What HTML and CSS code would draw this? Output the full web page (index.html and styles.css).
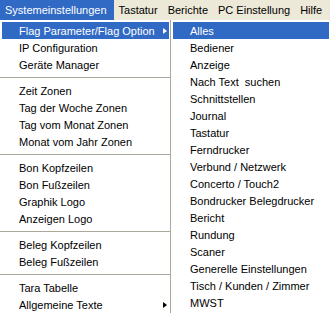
FILE: index.html
```html
<!doctype html>
<html>
<head>
<meta charset="utf-8">
<title>Systemeinstellungen</title>
<link rel="stylesheet" href="styles.css">
</head>
<body>
<div class="menubar">
	<span class="bar-item active">Systemeinstellungen</span>
	<span class="bar-item">Tastatur</span>
	<span class="bar-item">Berichte</span>
	<span class="bar-item">PC Einstellung</span>
	<span class="bar-item">Hilfe</span>
</div>
<div class="menus">
	<ul class="dropdown main">
		<li class="item active sub">Flag Parameter/Flag Option<i class="arrow"></i></li>
		<li class="item">IP Configuration</li>
		<li class="item">Geräte Manager</li>
		<li class="sep"></li>
		<li class="item">Zeit Zonen</li>
		<li class="item">Tag der Woche Zonen</li>
		<li class="item">Tag vom Monat Zonen</li>
		<li class="item">Monat vom Jahr Zonen</li>
		<li class="sep"></li>
		<li class="item">Bon Kopfzeilen</li>
		<li class="item">Bon Fußzeilen</li>
		<li class="item">Graphik Logo</li>
		<li class="item">Anzeigen Logo</li>
		<li class="sep"></li>
		<li class="item">Beleg Kopfzeilen</li>
		<li class="item">Beleg Fußzeilen</li>
		<li class="sep"></li>
		<li class="item">Tara Tabelle</li>
		<li class="item sub">Allgemeine Texte<i class="arrow"></i></li>
	</ul>
	<ul class="dropdown submenu">
		<li class="item active">Alles</li>
		<li class="item">Bediener</li>
		<li class="item">Anzeige</li>
		<li class="item">Nach Text&nbsp; suchen</li>
		<li class="item">Schnittstellen</li>
		<li class="item">Journal</li>
		<li class="item">Tastatur</li>
		<li class="item">Ferndrucker</li>
		<li class="item">Verbund / Netzwerk</li>
		<li class="item">Concerto / Touch2</li>
		<li class="item">Bondrucker Belegdrucker</li>
		<li class="item">Bericht</li>
		<li class="item">Rundung</li>
		<li class="item">Scaner</li>
		<li class="item">Generelle Einstellungen</li>
		<li class="item">Tisch / Kunden / Zimmer</li>
		<li class="item">MWST</li>
	</ul>
</div>
</body>
</html>
```

FILE: styles.css
```css
html,body,ul,li{ margin: 0; padding: 0; }
ul,li{ list-style: none; }
body{ background: #fff; color: #000; font: 11px "Liberation Sans", Arial, sans-serif; overflow: hidden; }

.menubar{ display: flex; height: 20px; width: 330px; background: #ece9d8; }
.bar-item{ display: flex; align-items: center; padding: 0 5px; white-space: nowrap; }
.bar-item.active{ background: #316ac5; color: #fff; padding-right: 7px; }

.menus{ display: flex; align-items: flex-start; }
.dropdown{ padding-top: 2px; background: #fff; }
.dropdown.main{ width: 167px; padding-left: 2px; padding-right: 1px; border-right: 1px solid #aca899; }
.dropdown.submenu{ width: 156px; padding-left: 2px; padding-right: 2px; }

.item{ display: flex; align-items: center; height: 17px; padding-left: 17px; white-space: nowrap; }
.item.active{ background: #316ac5; color: #fff; }
.item .arrow{ margin-left: auto; margin-right: 2px; margin-top: 1px; width: 0; height: 0;
	border-left: 4px solid #000; border-top: 3.5px solid transparent; border-bottom: 3.5px solid transparent; }
.item.active .arrow{ border-left-color: #fff; }

.sep{ height: 9px; margin: 0 -1px 0 -2px; display: flex; align-items: center; }
.sep::before{ content: ""; display: block; width: 100%; height: 1px; background: #aca899; }
```
